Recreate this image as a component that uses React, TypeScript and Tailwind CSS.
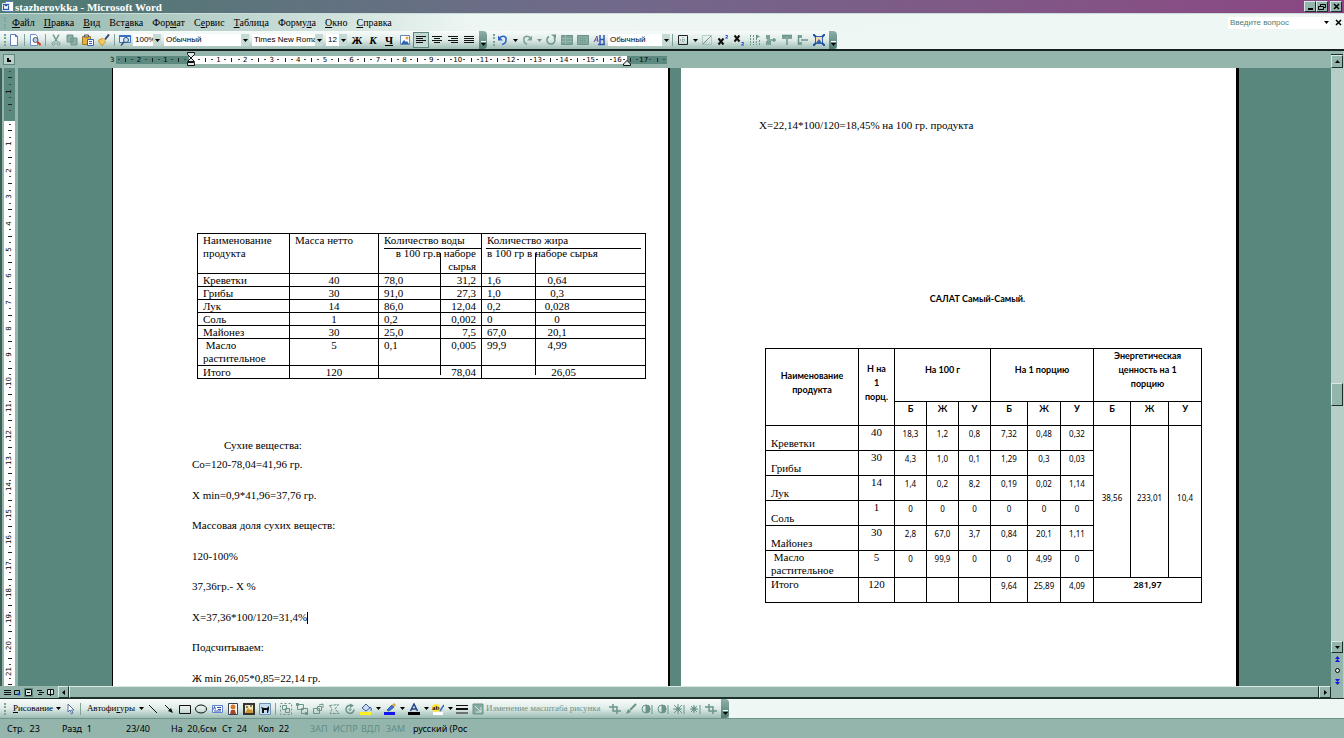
import type { ReactNode } from "react";

const menu = ["Файл", "Правка", "Вид", "Вставка", "Формат", "Сервис", "Таблица", "Формула", "Окно", "Справка"];
// index of the underlined accelerator letter
const accel = [0, 0, 0, 3, 3, 1, 0, 5, 0, 0];

const composition = [
  ["Креветки", "40", "78,0", "31,2", "1,6", "0,64"],
  ["Грибы", "30", "91,0", "27,3", "1,0", "0,3"],
  ["Лук", "14", "86,0", "12,04", "0,2", "0,028"],
  ["Соль", "1", "0,2", "0,002", "0", "0"],
  ["Майонез", "30", "25,0", "7,5", "67,0", "20,1"],
  ["\u00a0Масло растительное", "5", "0,1", "0,005", "99,9", "4,99"],
];

const nutrition = [
  ["Креветки", "40", "18,3", "1,2", "0,8", "7,32", "0,48", "0,32"],
  ["Грибы", "30", "4,3", "1,0", "0,1", "1,29", "0,3", "0,03"],
  ["Лук", "14", "1,4", "0,2", "8,2", "0,19", "0,02", "1,14"],
  ["Соль", "1", "0", "0", "0", "0", "0", "0"],
  ["Майонез", "30", "2,8", "67,0", "3,7", "0,84", "20,1", "1,11"],
  ["\u00a0Масло растительное", "5", "0", "99,9", "0", "0", "4,99", "0"],
];

const paragraphs = [
  "Со=120-78,04=41,96 гр.",
  "Х min=0,9*41,96=37,76 гр.",
  "Массовая доля сухих веществ:",
  "120-100%",
  "37,36гр.- Х %",
  "Х=37,36*100/120=31,4%",
  "Подсчитываем:",
  "Ж min 26,05*0,85=22,14 гр.",
];

function Btn({ label, active, children }: { label: string; active?: boolean; children: ReactNode }) {
  return (
    <button
      aria-label={label}
      className={
        active
          ? "flex h-4 w-4 shrink-0 items-center justify-center border border-[#5f857c] bg-[#c3d8d2]"
          : "flex h-4 w-4 shrink-0 items-center justify-center"
      }
    >
      {children}
    </button>
  );
}

function Svg({ children }: { children: ReactNode }) {
  return (
    <svg viewBox="0 0 12 12" className="h-3 w-3 shrink-0" fill="none" stroke="currentColor" strokeWidth="1">
      {children}
    </svg>
  );
}

function Arrow({ dim }: { dim?: boolean }) {
  return (
    <button aria-label="Ещё" className={dim ? "flex w-2 shrink-0 justify-center text-[#6f948b]" : "flex w-2 shrink-0 justify-center text-black"}>
      <svg viewBox="0 0 5 3" className="h-[3px] w-[5px]" fill="currentColor">
        <path d="M0 0h5L2.5 3z" />
      </svg>
    </button>
  );
}

function Sep() {
  return <span className="mx-0.5 h-3 w-px shrink-0 bg-[#7fa39a]" />;
}

function Grip() {
  return <span className="ml-1 h-3 w-0.5 shrink-0 border-l-2 border-dotted border-[#7fa39a]" />;
}

function Cap() {
  return (
    <button aria-label="Параметры панели" className="ml-0.5 flex w-2 shrink-0 flex-col items-center justify-end self-stretch rounded-r-sm bg-linear-to-b from-[#8fb0a8] to-[#4f7c72] pb-0.5">
      <svg viewBox="0 0 5 6" className="h-1.5 w-[5px]">
        <path d="M0 .5h5" stroke="#fff" />
        <path d="M0 2h5L2.5 5z" fill="#000" />
      </svg>
    </button>
  );
}

function Combo({ label, value, className }: { label: string; value: string; className: string }) {
  return (
    <div className={"flex h-3 shrink-0 items-center bg-white " + className}>
      <select aria-label={label} className="h-3 min-w-0 flex-1 appearance-none bg-white pl-0.5 font-['Liberation_Sans'] text-[8px] leading-3 text-black">
        <option>{value}</option>
      </select>
      <span className="flex h-3 w-2 shrink-0 items-center justify-center bg-[#c5dad4]">
        <svg viewBox="0 0 5 3" className="h-[3px] w-[5px]">
          <path d="M0 0h5L2.5 3z" />
        </svg>
      </span>
    </div>
  );
}

// Bars of a paragraph alignment icon, each given as [x, width]
function Bars({ rows }: { rows: number[][] }) {
  return (
    <Svg>
      {rows.map(([x, w], i) => (
        <path key={i} d={`M${x} ${2 + i * 2}.5h${w}`} stroke="#111" />
      ))}
    </Svg>
  );
}

function MenuBar() {
  return (
    <div className="flex h-[18px] items-center border-t border-[#c9dcd7] bg-linear-to-r from-[#8fb4ab] via-[#edf6f3] via-35% to-[#eff7f4] pr-0.5">
      <Grip />
      <nav className="flex flex-1 gap-[9px] pl-1.5">
        {menu.map((m, i) => (
          <button key={m} className="text-[10px] leading-4">
            {m.slice(0, accel[i])}
            <u>{m[accel[i]]}</u>
            {m.slice(accel[i] + 1)}
          </button>
        ))}
      </nav>
      <input
        aria-label="Вопрос"
        placeholder="Введите вопрос"
        className="h-3 w-[94px] bg-white pl-0.5 font-['Liberation_Sans'] text-[8px] placeholder:text-[#4d7f74]"
      />
      <span className="flex h-3 w-2 items-center bg-white">
        <Arrow />
      </span>
      <button aria-label="Закрыть документ" className="ml-1 flex w-2 justify-center">
        <svg viewBox="0 0 7 7" className="h-[7px] w-[7px]" stroke="#000" strokeWidth="1.5">
          <path d="M1 1l5 5M6 1L1 6" />
        </svg>
      </button>
    </div>
  );
}

function StandardBar() {
  return (
    <div className="flex h-[18px] items-center bg-linear-to-b from-[#f8fcfb] via-[#dfebe7] to-[#9dbdb5]">
      <Grip />
      <Btn label="Создать">
        <Svg><path d="M2.5 .5h5l2 2v9h-7z" fill="#fff" stroke="#5f83b5" /><path d="M7.5 .5v2h2" stroke="#4a6fa0" /></Svg>
      </Btn>
      <Sep />
      <Btn label="Предварительный просмотр">
        <Svg><path d="M1.5 .5h5l2 2v9h-7z" fill="#fff" stroke="#6f8fc5" /><circle cx="6.5" cy="6" r="2.5" fill="#b5d0ee" stroke="#556" /><path d="M8.500 8l3 3" stroke="#d23b2a" strokeWidth="2" /></Svg>
      </Btn>
      <Sep />
      <Btn label="Вырезать">
        <Svg><path d="M3 .5l4 7M9 .5L5 7.5" stroke="#6f978d" strokeWidth="1.5" /><circle cx="3.5" cy="9.5" r="1.5" stroke="#6f978d" /><circle cx="8.5" cy="9.5" r="1.5" stroke="#6f978d" /></Svg>
      </Btn>
      <Btn label="Копировать">
        <Svg><path d="M1 1h6v7H1zM5 4h6v7H5z" fill="#8db0a7" stroke="#6a948a" /></Svg>
      </Btn>
      <Btn label="Вставить">
        <Svg><path d="M.5 2.5h8v8h-8z" fill="#e5b23c" stroke="#a07a20" /><path d="M2.5 1h4v2h-4z" fill="#ddd" stroke="#555" /><path d="M5.5 5.5h6v6h-6z" fill="#fff" stroke="#3a5fba" /><path d="M7 7.5h3M7 9.5h3" stroke="#3a5fba" /></Svg>
      </Btn>
      <Btn label="Формат по образцу">
        <Svg><path d="M0 6.5L5 4l3 3-4 5z" fill="#f0c860" stroke="#c59a35" /><path d="M5 3.5l4 4" stroke="#fff" /><path d="M7 5.5L11 .5" stroke="#3a4570" strokeWidth="2" /></Svg>
      </Btn>
      <Sep />
      <Btn label="Найти">
        <Svg><path d="M.5 1.500h11v7H.5z" fill="#e5f0fa" stroke="#3a6fc5" /><path d="M.5 2h11" stroke="#3a6fc5" strokeWidth="2" /><circle cx="7" cy="6" r="2.5" fill="#cfe2f5" stroke="#357" /><path d="M5 8l-3 3.500" stroke="#357" strokeWidth="1.5" /></Svg>
      </Btn>
      <div className="flex items-center gap-[3px] pr-0.5">
        <Combo label="Масштаб" value="100%" className="w-7" />
        <Combo label="Стиль" value="Обычный" className="w-[85px]" />
        <Combo label="Шрифт" value="Times New Roman" className="w-[71px]" />
        <Combo label="Размер шрифта" value="12" className="w-[21px]" />
      </div>
      <Btn label="Полужирный"><b className="text-[11px] leading-4">Ж</b></Btn>
      <Btn label="Курсив"><b className="text-[11px] italic leading-4">К</b></Btn>
      <Btn label="Подчёркнутый"><b className="text-[11px] leading-4 underline">Ч</b></Btn>
      <Btn label="Рисунок">
        <Svg><path d="M1.5 1.5h9v9h-9z" fill="#fff" stroke="#6486b8" /><path d="M2 10l3-4 2 2 1-1 2 3z" fill="#2d63b5" stroke="none" /><circle cx="8" cy="4" r="1.5" fill="#e7a63a" stroke="none" /></Svg>
      </Btn>
      <Btn label="По левому краю" active><Bars rows={[[1, 10], [1, 7], [1, 10], [1, 7]]} /></Btn>
      <Btn label="По центру"><Bars rows={[[1, 10], [3, 6], [1, 10], [3, 6]]} /></Btn>
      <Btn label="По правому краю"><Bars rows={[[1, 10], [4, 7], [1, 10], [4, 7]]} /></Btn>
      <Btn label="По ширине"><Bars rows={[[1, 10], [1, 10], [1, 10], [1, 10]]} /></Btn>
      <Cap />
      <span className="w-0.5" />
      <Grip />
      <Btn label="Отменить">
        <Svg><path d="M2 4.5c4-4 8-2 7 2 0 2-2 3.5-4 4" stroke="#2f62c9" strokeWidth="1.5" /><path d="M1 1.5v5h5z" fill="#2f62c9" stroke="none" /></Svg>
      </Btn>
      <Arrow />
      <Btn label="Вернуть">
        <Svg><path d="M10 4.5c-4-4-8-2-7 2 0 2 2 3.5 3 4" stroke="#7ba298" strokeWidth="1.5" /><path d="M11 1.5v5H6z" fill="#7ba298" stroke="none" /></Svg>
      </Btn>
      <Arrow dim />
      <Btn label="Повторить">
        <Svg><path d="M4 2.5a4 4 0 1 0 5 1" stroke="#6d968c" strokeWidth="1.5" /><path d="M6 .5h5v4z" fill="#6d968c" stroke="none" /></Svg>
      </Btn>
      <Btn label="Таблица">
        <Svg><path d="M.5 1.5h11v9H.5z" fill="#7ea69b" stroke="#6a948a" /><path d="M.5 4.5h11M.5 7.5h11M4.5 1v9" stroke="#94b6ad" /></Svg>
      </Btn>
      <Btn label="Колонки">
        <Svg><path d="M.5 1.5h11v9H.5z" fill="#85aba1" stroke="#6a948a" /><path d="M3 4.5h6M3 6.5h6M3 8.5h6" stroke="#6a948a" strokeDasharray="1 1" /></Svg>
      </Btn>
      <Btn label="Стили">
        <Svg><path d="M1 8l3-6 1 6M2 6h3" stroke="#6a4fa0" /><path d="M7 1v9M11 1v9M7 5.5h4M5 10.5h7" stroke="#2f55b5" strokeWidth="1.5" /></Svg>
      </Btn>
      <Combo label="Стиль таблицы" value="Обычный" className="ml-px w-[62px]" />
      <Sep />
      <Btn label="Границы">
        <Svg><path d="M1.5 1.5h9v9h-9z" stroke="#222" /><path d="M6 3v6M3 6h6" stroke="#789" strokeDasharray="1 1" /></Svg>
      </Btn>
      <Arrow />
      <Btn label="Диагональ">
        <Svg><path d="M1.5 1.5h9v9h-9z" stroke="#86aca2" strokeDasharray="1 1" /><path d="M2 10l8-8" stroke="#6a948a" /></Svg>
      </Btn>
      <Btn label="Надстрочный">
        <Svg><path d="M1.500 4.500l5 6M6.500 4.500l-5 6" stroke="#111" strokeWidth="2" /><path d="M8.500 1.500h2v1l-2 1.500h2.500" stroke="#2a4fd0" /></Svg>
      </Btn>
      <Btn label="Подстрочный">
        <Svg><path d="M1.500 1.500l5 6M6.500 1.500l-5 6" stroke="#111" strokeWidth="2" /><path d="M8.500 8.500h2v1l-2 1.500h2.500" stroke="#2a4fd0" /></Svg>
      </Btn>
      <Btn label="Направление текста">
        <Svg><path d="M1.5 1v10M4.5 1v10M7.5 4v7M10.5 6v5" stroke="#6a948a" strokeDasharray="2 1" /><path d="M7 .5l4 2-4 2z" fill="#6a948a" stroke="none" /></Svg>
      </Btn>
      <Btn label="Выровнять слева">
        <Svg><path d="M1 1h4v4H1zM1 7h5v4H1z" fill="#7ba298" stroke="none" /><path d="M2 6h9M9 4v4" stroke="#6a948a" strokeWidth="1.5" /></Svg>
      </Btn>
      <Btn label="Выровнять сверху">
        <Svg><path d="M1 1h4v4H1zM7 1h4v4H7z" fill="#7ba298" stroke="none" /><path d="M6 2v9M1 1.5h10" stroke="#6a948a" strokeWidth="1.5" /></Svg>
      </Btn>
      <Btn label="Распределить">
        <Svg><path d="M1 1h4v3H1zM1 8h4v3H1z" fill="#7ba298" stroke="none" /><path d="M1.5 1v10M4 6h7" stroke="#6a948a" strokeWidth="1.5" /></Svg>
      </Btn>
      <Btn label="Полотно">
        <Svg><path d="M2.5 2.5h7v7h-7z" fill="#f1d9b0" stroke="#2f62b5" /><path d="M3 9l3-4 3 4z" fill="#2f62b5" stroke="none" /><path d="M0 0l3 3M12 0L9 3M0 12l3-3M12 12L9 9" stroke="#1f4fa5" strokeWidth="2" /></Svg>
      </Btn>
      <Cap />
      <span className="flex-1 self-stretch bg-[#eff7f4]" />
    </div>
  );
}

// One slot is a quarter of a centimetre: number, dot, tick, dot
function Slot({ n, vertical }: { n: number; vertical?: boolean }) {
  const k = ((n % 4) + 4) % 4;
  if (k === 0 && n !== 0) {
    return <span className={vertical ? "z-10 -rotate-90" : "z-10"}>{Math.abs(n / 4)}</span>;
  }
  if (n === 0) return null;
  if (k === 2) return <span className={vertical ? "h-px w-1 bg-[#222]" : "h-1 w-px bg-[#222]"} />;
  return <span className="h-px w-0.5 bg-[#444]" />;
}

function HorizontalRuler() {
  const slots = Array.from({ length: 84 }, (_, i) => i - 12);
  const base = "flex min-w-0 items-center justify-center ";
  return (
    <div className="flex h-[17px] items-center bg-[#93b5ac]">
      <div className="flex w-[18px] shrink-0 justify-end pr-[3px]">
        <button aria-label="Позиция табуляции" className="flex h-[11px] w-3 items-center justify-center border border-[#5f857c] bg-[#b9d1cb]">
          <span className="h-1 w-1 border-b-2 border-l-2 border-black" />
        </button>
      </div>
      <div className="flex flex-1 justify-center pl-0.5">
        <div className="w-[1127px] shrink-0">
          <div className="relative -ml-[3px] grid h-2 w-[558px] grid-cols-[repeat(84,1fr)] font-['DejaVu_Sans'] text-[7px] leading-2">
            {slots.map((n) => (
              <div key={n} className={base + (n === -12 ? "" : n < 0 || n > 65 ? "bg-[#5b897f]" : "bg-white")}>
                <Slot n={n} />
              </div>
            ))}
            <svg viewBox="0 0 8 14" className="absolute -top-1 left-[78px] z-20 h-3.5 w-2" fill="#dde9e6" stroke="#111">
              <path d="M.5 .5h7v2L4 6 .5 2.5zM.5 9.5L4 6l3.5 3.5zM.5 10.5h7v3h-7z" />
            </svg>
            <svg viewBox="0 0 8 6" className="absolute top-1 left-[514px] z-20 h-1.5 w-2" fill="#dde9e6" stroke="#111">
              <path d="M.5 5.5V4L4 .5 7.5 4v1.5z" />
            </svg>
          </div>
        </div>
      </div>
    </div>
  );
}

function VerticalRuler() {
  const slots = Array.from({ length: 94 }, (_, i) => i - 7);
  return (
    <div className="flex w-[18px] shrink-0 overflow-hidden border-l-2 border-[#3d5f58] bg-[#93b5ac] pl-0.5">
      <div className="grid h-[620px] w-[11px] grid-rows-[repeat(94,1fr)] font-['DejaVu_Sans'] text-[7px] leading-[7px]">
        {slots.map((n) => (
          <div key={n} className={n < 1 ? "flex min-h-0 items-center justify-center bg-[#5b897f]" : "flex min-h-0 items-center justify-center bg-white"}>
            <Slot n={n} vertical />
          </div>
        ))}
      </div>
    </div>
  );
}

function CompositionTable() {
  const cell = "border border-black px-[5px] align-top";
  return (
    <div className="relative w-[449px]">
      <table className="w-full table-fixed border-collapse text-[11px] leading-[13px]">
        <colgroup>
          <col className="w-[92px]" />
          <col className="w-[89px]" />
          <col className="w-[103px]" />
          <col />
        </colgroup>
        <thead>
          <tr className="text-left">
            <th className={cell + " font-normal"}>Наименование продукта</th>
            <th className={cell + " font-normal"}>Масса нетто</th>
            <th className={cell + " font-normal"}>
              Количество воды
              <div className="text-right whitespace-nowrap">в 100 гр.в наборе<br />сырья</div>
            </th>
            <th className={cell + " font-normal"}>
              Количество жира<br />в 100 гр в наборе сырья
            </th>
          </tr>
        </thead>
        <tbody>
          {composition.map((r, i) => (
            <tr key={r[0]} className={i === 5 ? "" : "leading-3"}>
              <td className={cell}>{r[0]}</td>
              <td className={cell + " text-center"}>{r[1]}</td>
              <td className={cell}>
                <div className="flex justify-between"><span>{r[2]}</span><span>{r[3]}</span></div>
              </td>
              <td className={cell}>
                <div className="flex"><span className="w-[54px]">{r[4]}</span><span className="w-8 text-center">{r[5]}</span></div>
              </td>
            </tr>
          ))}
          <tr className="leading-3">
            <td className={cell}>Итого</td>
            <td className={cell + " text-center"}>120</td>
            <td className={cell + " text-right"}>78,04</td>
            <td className={cell + " text-center"}>26,05</td>
          </tr>
        </tbody>
      </table>
      {/* lines drawn over the table by hand */}
      <span className="absolute top-[15px] left-[187px] h-px w-[97px] bg-black" />
      <span className="absolute top-[15px] left-[289px] h-px w-[155px] bg-black" />
      <span className="absolute top-5 left-[243px] h-[122px] w-px bg-black" />
      <span className="absolute top-5 left-[338px] h-[122px] w-px bg-black" />
    </div>
  );
}

function NutritionTable() {
  const cell = "border border-black p-0";
  const head = cell + " font-['Lato'] text-[9px] font-bold";
  const num = cell + " text-center align-top pt-1 font-['Noto_Sans'] text-[8px] leading-2";
  return (
    <table className="w-[436px] table-fixed border-collapse text-[11px] leading-[13px]">
      <colgroup>
        <col className="w-[93px]" />
        <col className="w-9" />
        <col className="w-8" />
        <col className="w-8" />
        <col className="w-8" />
        <col className="w-[37px]" />
        <col className="w-[33px]" />
        <col className="w-[33px]" />
        <col className="w-[37px]" />
        <col className="w-[38px]" />
        <col className="w-[33px]" />
      </colgroup>
      <thead>
        <tr className="h-[53px] leading-[14px]">
          <th rowSpan={2} className={head + " pb-2"}>Наименование продукта</th>
          <th rowSpan={2} className={head + " pb-2"}>Н на<br />1<br />порц.</th>
          <th colSpan={3} className={head + " pb-2.5"}>На 100 г</th>
          <th colSpan={3} className={head + " pb-2.5"}>На 1 порцию</th>
          <th colSpan={3} className={head + " px-3 align-top"}>Энергетическая ценность на 1 порцию</th>
        </tr>
        <tr className="h-6 leading-[14px]">
          {["Б", "Ж", "У", "Б", "Ж", "У", "Б", "Ж", "У"].map((h, i) => (
            <th key={i} className={head + " align-top"}>{h}</th>
          ))}
        </tr>
      </thead>
      <tbody>
        {nutrition.map((r, i) => (
          <tr key={r[0]} className="h-[25px]">
            <td className={cell + " px-[5px] align-bottom"}>{r[0]}</td>
            <td className={cell + " text-center align-top"}>{r[1]}</td>
            {r.slice(2).map((v, j) => (
              <td key={j} className={num}>{v}</td>
            ))}
            {i === 0 &&
              ["38,56", "233,01", "10,4"].map((v) => (
                <td key={v} rowSpan={6} className="border border-black pb-2 text-center font-['Noto_Sans'] text-[8px]">{v}</td>
              ))}
          </tr>
        ))}
        <tr className="h-[25px]">
          <td className={cell + " px-[5px] align-top"}>Итого</td>
          <td className={cell + " text-center align-top"}>120</td>
          {["", "", "", "9,64", "25,89", "4,09"].map((v, j) => (
            <td key={j} className={num}>{v}</td>
          ))}
          <td colSpan={3} className={cell + " text-center align-top font-['Noto_Sans'] text-[9px] font-semibold"}>281,97</td>
        </tr>
      </tbody>
    </table>
  );
}

function Pages() {
  return (
    <div className="flex min-w-0 flex-1 justify-center overflow-hidden bg-[#59877d] pl-0.5">
      <div className="flex w-[1127px] shrink-0 gap-[11px]">
        <article className="w-[558px] border-r-2 border-l border-black bg-white pt-[165px] pl-[79px] text-[11px] leading-4 whitespace-nowrap">
          <div className="pl-[5px] whitespace-normal">
            <CompositionTable />
          </div>
          <p className="mt-[58px] pl-8">Сухие вещества:</p>
          <div className="mt-[3px] flex h-[230px] flex-col justify-between">
            {paragraphs.map((p, i) => (
              <p key={p}>
                {p}
                {i === 5 && <span className="inline-block h-3 w-px bg-black align-middle" />}
              </p>
            ))}
          </div>
        </article>
        <article className="w-[558px] border-r-3 border-black bg-white pt-[49px] pl-[78px] text-[11px] leading-4">
          <p>Х=22,14*100/120=18,45% на 100 гр. продукта</p>
          <p className="mt-[158px] w-[437px] text-center font-['Lato'] text-[9px] font-bold">САЛАТ Самый-Самый.</p>
          <div className="mt-[41px] pl-1.5">
            <NutritionTable />
          </div>
        </article>
      </div>
    </div>
  );
}

const raised = "flex shrink-0 items-center justify-center border border-t-[#dbe9e5] border-r-[#1d2f2b] border-b-[#1d2f2b] border-l-[#dbe9e5] bg-[#93b5ac]";

function VerticalScroll() {
  return (
    <div className="flex w-[13px] shrink-0 flex-col bg-[#b5cfc8] pr-px">
      <span className="h-1 border-b border-[#1d2f2b] bg-[#93b5ac]" />
      <button aria-label="Вверх" className={raised + " h-[13px]"}>
        <svg viewBox="0 0 5 3" className="h-[3px] w-[5px]"><path d="M0 3h5L2.5 0z" /></svg>
      </button>
      <div className="flex flex-1 flex-col">
        <span className="flex-[316]" />
        <span className={raised + " h-[23px]"} />
        <span className="flex-[236]" />
      </div>
      <button aria-label="Вниз" className={raised + " h-3"}>
        <svg viewBox="0 0 5 3" className="h-[3px] w-[5px]"><path d="M0 0h5L2.5 3z" /></svg>
      </button>
      <div className="flex h-[45px] flex-col items-center justify-around bg-[#93b5ac] pb-2.5">
        <button aria-label="Предыдущая страница"><svg viewBox="0 0 5 6" className="h-1.5 w-[5px]" fill="#1414e0"><path d="M0 3h5L2.5 0zM0 6h5L2.5 3z" /></svg></button>
        <button aria-label="Выбор объекта перехода" className="h-[5px] w-[5px] rounded-full border border-black bg-[#d8e5e1]" />
        <button aria-label="Следующая страница"><svg viewBox="0 0 5 6" className="h-1.5 w-[5px]" fill="#1414e0"><path d="M0 0h5L2.5 3zM0 3h5L2.5 6z" /></svg></button>
      </div>
    </div>
  );
}

function HorizontalScroll() {
  return (
    <div className="flex h-3 shrink-0 items-stretch bg-[#93b5ac]">
      <div className="flex w-[58px] items-center justify-around px-0.5">
        {["Обычный", "Веб-документ", "Разметка страницы", "Структура", "Режим чтения"].map((v, i) => (
          <button key={v} aria-label={v} className={i === 2 ? "border border-[#5f857c] bg-[#d5e3df]" : ""}>
            <svg viewBox="0 0 7 7" className="h-[7px] w-[7px]" fill="none" stroke="#111">
              {i === 0 && <path d="M0 1.5h7M0 3.5h7M0 5.5h7" />}
              {i === 1 && <><path d="M.5 1.5h5v4h-5z" /><circle cx="5" cy="5" r="1.5" fill="#1a4fd0" stroke="none" /></>}
              {i === 2 && <path d="M.5 .5h6v6h-6zM2 3.5h3" />}
              {i === 3 && <path d="M0 1.5h5M2 3.5h5M1 5.5h4" />}
              {i === 4 && <path d="M.5 .5h6v5h-6zM3.5 1v6" fill="#d5e3df" />}
            </svg>
          </button>
        ))}
      </div>
      <button aria-label="Влево" className={raised + " w-[11px]"}>
        <svg viewBox="0 0 3 5" className="h-[5px] w-[3px]"><path d="M3 0v5L0 2.5z" /></svg>
      </button>
      <span className={raised + " flex-1"} />
      <button aria-label="Вправо" className={raised + " w-3"}>
        <svg viewBox="0 0 3 5" className="h-[5px] w-[3px]"><path d="M0 0v5l3-2.5z" /></svg>
      </button>
    </div>
  );
}

function DrawingBar() {
  return (
    <div className="flex h-5 shrink-0 items-center border-t border-[#1d2f2b] bg-linear-to-b from-[#f8fcfb] via-[#dfebe7] to-[#9dbdb5] text-[#6a948a]">
      <Grip />
      <button className="ml-1.5 w-[42px] text-[9px] whitespace-nowrap text-black"><u>Р</u>исование</button>
      <Arrow />
      <Btn label="Выбор объектов">
        <Svg><path d="M4 1v8l2-2 1.5 4 1.5-1-1.5-3H10z" fill="#fff" stroke="#5470a0" /></Svg>
      </Btn>
      <Sep />
      <button className="ml-0.5 w-[52px] text-[9px] whitespace-nowrap text-black">Автофи<u>г</u>уры</button>
      <Arrow />
      <Btn label="Линия"><Svg><path d="M2 2l8 8" stroke="#111" /></Svg></Btn>
      <Btn label="Стрелка"><Svg><path d="M2 2l6 6" stroke="#111" /><path d="M10 10L5 8l3-3z" fill="#111" stroke="none" /></Svg></Btn>
      <Btn label="Прямоугольник"><Svg><path d="M.5 2.5h11v8H.5z" stroke="#111" /></Svg></Btn>
      <Btn label="Овал"><Svg><ellipse cx="6" cy="6" rx="5.5" ry="4" stroke="#111" /></Svg></Btn>
      <Btn label="Надпись"><Svg><path d="M1.5 2.5h10v7h-10z" fill="#fff" stroke="#5f83d5" /><path d="M2.500 6.500l1-3 1 3M6 4.5h4M3 8h7M7 6.500h3" stroke="#2d53a5" /></Svg></Btn>
      <Btn label="WordArt"><Svg><path d="M1.5 .5h9v11h-9z" fill="#fff" stroke="#345" /><circle cx="6" cy="4" r="2.5" fill="#d9772a" stroke="none" /><path d="M3 11l1-4h4l1 4z" fill="#a8442a" stroke="none" /></Svg></Btn>
      <Btn label="Картинка"><Svg><path d="M1 1h10v10H1z" fill="#f5e6b5" stroke="#333" strokeWidth="2" /><path d="M2 10l3-5 2 2 2-1 1 4z" fill="#c9962e" stroke="none" /><path d="M3 4h2M7 3h2" stroke="#222" /></Svg></Btn>
      <Btn label="Рисунок из файла"><Svg><path d="M.5 .5h11v11H.5z" fill="#c5dcf2" stroke="#6f93b8" /><path d="M2 4l3 1h3l2-2v3l-1 4H8V7H5v3H3V6z" fill="#111" stroke="none" /></Svg></Btn>
      <Sep />
      <Btn label="Группировать"><Svg><path d="M2.5 2.5h4v4h-4zM5.5 5.5h4v4h-4z" /><path d="M.5 .5h11v11H.5z" strokeDasharray="2 2" /></Svg></Btn>
      <Btn label="Разгруппировать"><Svg><path d="M1.5 1.5h6v5h-6zM5.5 5.5h6v5h-6z" /><path d="M.5 .5h2v2h-2zM9.5 9.5h2v2h-2z" fill="currentColor" /></Svg></Btn>
      <Btn label="Перегруппировать"><Svg><path d="M1.5 5.5h6v5h-6zM5.5 3.5h4v4h-4z" /><path d="M7 2l4-1v4" /></Svg></Btn>
      <Btn label="Изменить узлы"><Svg><path d="M1.5 2.5l9-1L7 6l4 4.5h-9L4 6z" strokeDasharray="3 1" /></Svg></Btn>
      <Btn label="Повернуть"><Svg><path d="M7 2.5a4 4 0 1 0 3 4" strokeWidth="1.5" /><path d="M6 .5l4 2-4 2.5z" fill="currentColor" stroke="none" /><circle cx="6" cy="6.5" r="1" /></Svg></Btn>
      <Btn label="Цвет заливки"><Svg><path d="M2 5l4-4 4 4-4 3z" fill="#cfdcf0" stroke="#3c5f9c" /><path d="M10 4c2 1 1 3 1 4" stroke="#2f62c9" /><path d="M0 9h11v3H0z" fill="#ffee20" stroke="none" /></Svg></Btn>
      <Arrow />
      <Btn label="Цвет линий"><Svg><path d="M3 7l5-5 2 2-5 4z" fill="#3d78d8" stroke="#2f55a0" /><path d="M8 2l2-2 2 2-2 2z" fill="#e5a830" stroke="none" /><path d="M0 9h11v3H0z" fill="#1414ee" stroke="none" /></Svg></Btn>
      <Arrow />
      <Btn label="Цвет шрифта"><Svg><path d="M2.5 8L6 1l3.5 7M4 6h4" stroke="#23408f" strokeWidth="1.5" /><path d="M0 9h12v3H0z" fill="#000" stroke="none" /></Svg></Btn>
      <Arrow />
      <Btn label="Цвет выделения"><Svg><circle cx="4" cy="5" r="4" fill="#ffe83a" stroke="none" /><text x="0" y="7" fontSize="7" fontWeight="bold" fill="#111" stroke="none">ab</text><path d="M8 8l4-6" stroke="#3d68b8" strokeWidth="1.5" /><path d="M1 9h10v3H1z" fill="#fff" stroke="none" /></Svg></Btn>
      <Arrow />
      <Btn label="Тип линии"><Svg><path d="M0 2.5h12M0 10h12" stroke="#111" /><path d="M0 6h12" stroke="#111" strokeWidth="2" /></Svg></Btn>
      <button className="flex w-[137px] items-center gap-0.5 pl-0.5 text-[9px] whitespace-nowrap">
        <Svg><path d="M1 1h10v10H1z" fill="#86aca2" /><path d="M3 3l6 6M9 4v5H4" stroke="#d5e5e0" /></Svg>
        Изменение масштаба рисунка
      </button>
      <Btn label="Обрезка"><Svg><path d="M4 1v7h8M0 4h8v7" strokeWidth="1.5" /></Svg></Btn>
      <Btn label="Стиль линии"><Svg><path d="M11 1L5 7" strokeWidth="2" /><path d="M1 11l2-5 3 3z" fill="currentColor" stroke="none" /></Svg></Btn>
      <Btn label="Увеличить контрастность"><Svg><circle cx="5" cy="6" r="4" /><path d="M5 2a4 4 0 0 1 0 8z" fill="currentColor" /><path d="M11 2v9" /></Svg></Btn>
      <Btn label="Уменьшить контрастность"><Svg><circle cx="5" cy="6" r="4" /><path d="M5 2a4 4 0 0 1 0 8z" fill="currentColor" /><path d="M11 2v9" /></Svg></Btn>
      <Btn label="Увеличить яркость"><Svg><circle cx="5" cy="6" r="2" /><path d="M5 1v10M0 6h9M1 2l8 8M9 2l-8 8M11 2v9" /></Svg></Btn>
      <Btn label="Уменьшить яркость"><Svg><circle cx="5" cy="6" r="2" /><path d="M5 2v8M1 6h8M2 3l6 6M8 3L2 9M11 2v9" /></Svg></Btn>
      <Btn label="Обрезать"><Svg><path d="M4 1v7h8M0 4h8v7" strokeWidth="1.5" /></Svg></Btn>
      <Cap />
      <span className="flex-1 self-stretch bg-[#eff7f4]" />
    </div>
  );
}

function StatusBar() {
  return (
    <footer className="flex h-5 shrink-0 items-center border-t border-[#6f958c] bg-[#93b5ac] pl-[7px] font-['Noto_Sans'] text-[9px] whitespace-nowrap">
      <span className="w-[55px]">Стр.&nbsp; 23</span>
      <span className="w-16">Разд&nbsp; 1</span>
      <span className="w-[45px]">23/40</span>
      <span className="w-[51px]">На&nbsp; 20,6см</span>
      <span className="w-9">Ст&nbsp; 24</span>
      <span className="w-[52px]">Кол&nbsp; 22</span>
      <span className="w-[23px] text-[#648d83]">ЗАП</span>
      <span className="w-7 text-[#648d83]">ИСПР</span>
      <span className="w-[25px] text-[#648d83]">ВДЛ</span>
      <span className="w-[27px] text-[#648d83]">ЗАМ</span>
      <span>русский (Рос</span>
    </footer>
  );
}

export default function App() {
  return (
    <div className="flex h-screen flex-col overflow-hidden font-['Liberation_Serif',serif] text-black">
      <header className="flex h-[13px] shrink-0 items-center bg-linear-to-r from-[#4c7b72] via-[#70698a] via-45% to-[#8b4683] pr-0.5 pl-0.5">
        <svg viewBox="0 0 12 12" className="h-3 w-3" fill="none">
          <path d="M3.5 .5h8v10h-8z" fill="#fff" stroke="#5a7fc0" />
          <path d="M.5 2.5h7v7h-7z" fill="#2c56a8" stroke="#dce6f5" />
          <path d="M2 4l1 4 1-3 1 3 1-4" stroke="#fff" />
        </svg>
        <h1 className="flex-1 pl-px text-[11px] leading-3 font-bold text-white">stazherovkka - Microsoft Word</h1>
        <button aria-label="Свернуть" className={raised + " h-[11px] w-3"}>
          <span className="mt-1 h-0.5 w-[5px] bg-black" />
        </button>
        <button aria-label="Восстановить" className={raised + " h-[11px] w-3"}>
          <svg viewBox="0 0 8 8" className="h-2 w-2" fill="none" stroke="#000"><path d="M2.5 3V1.5h5v3H6M.5 3.5h5v3h-5z" /></svg>
        </button>
        <button aria-label="Закрыть" className={raised + " ml-0.5 h-[11px] w-3"}>
          <svg viewBox="0 0 7 7" className="h-[7px] w-[7px]" stroke="#000" strokeWidth="1.5"><path d="M1 1l5 5M6 1L1 6" /></svg>
        </button>
      </header>
      <MenuBar />
      <div className="shrink-0 border-b-2 border-[#16211f]">
        <StandardBar />
      </div>
      <main className="flex min-h-0 flex-1">
        <div className="flex min-w-0 flex-1 flex-col">
          <HorizontalRuler />
          <div className="flex min-h-0 flex-1">
            <VerticalRuler />
            <Pages />
          </div>
          <HorizontalScroll />
        </div>
        <VerticalScroll />
      </main>
      <DrawingBar />
      <StatusBar />
    </div>
  );
}
